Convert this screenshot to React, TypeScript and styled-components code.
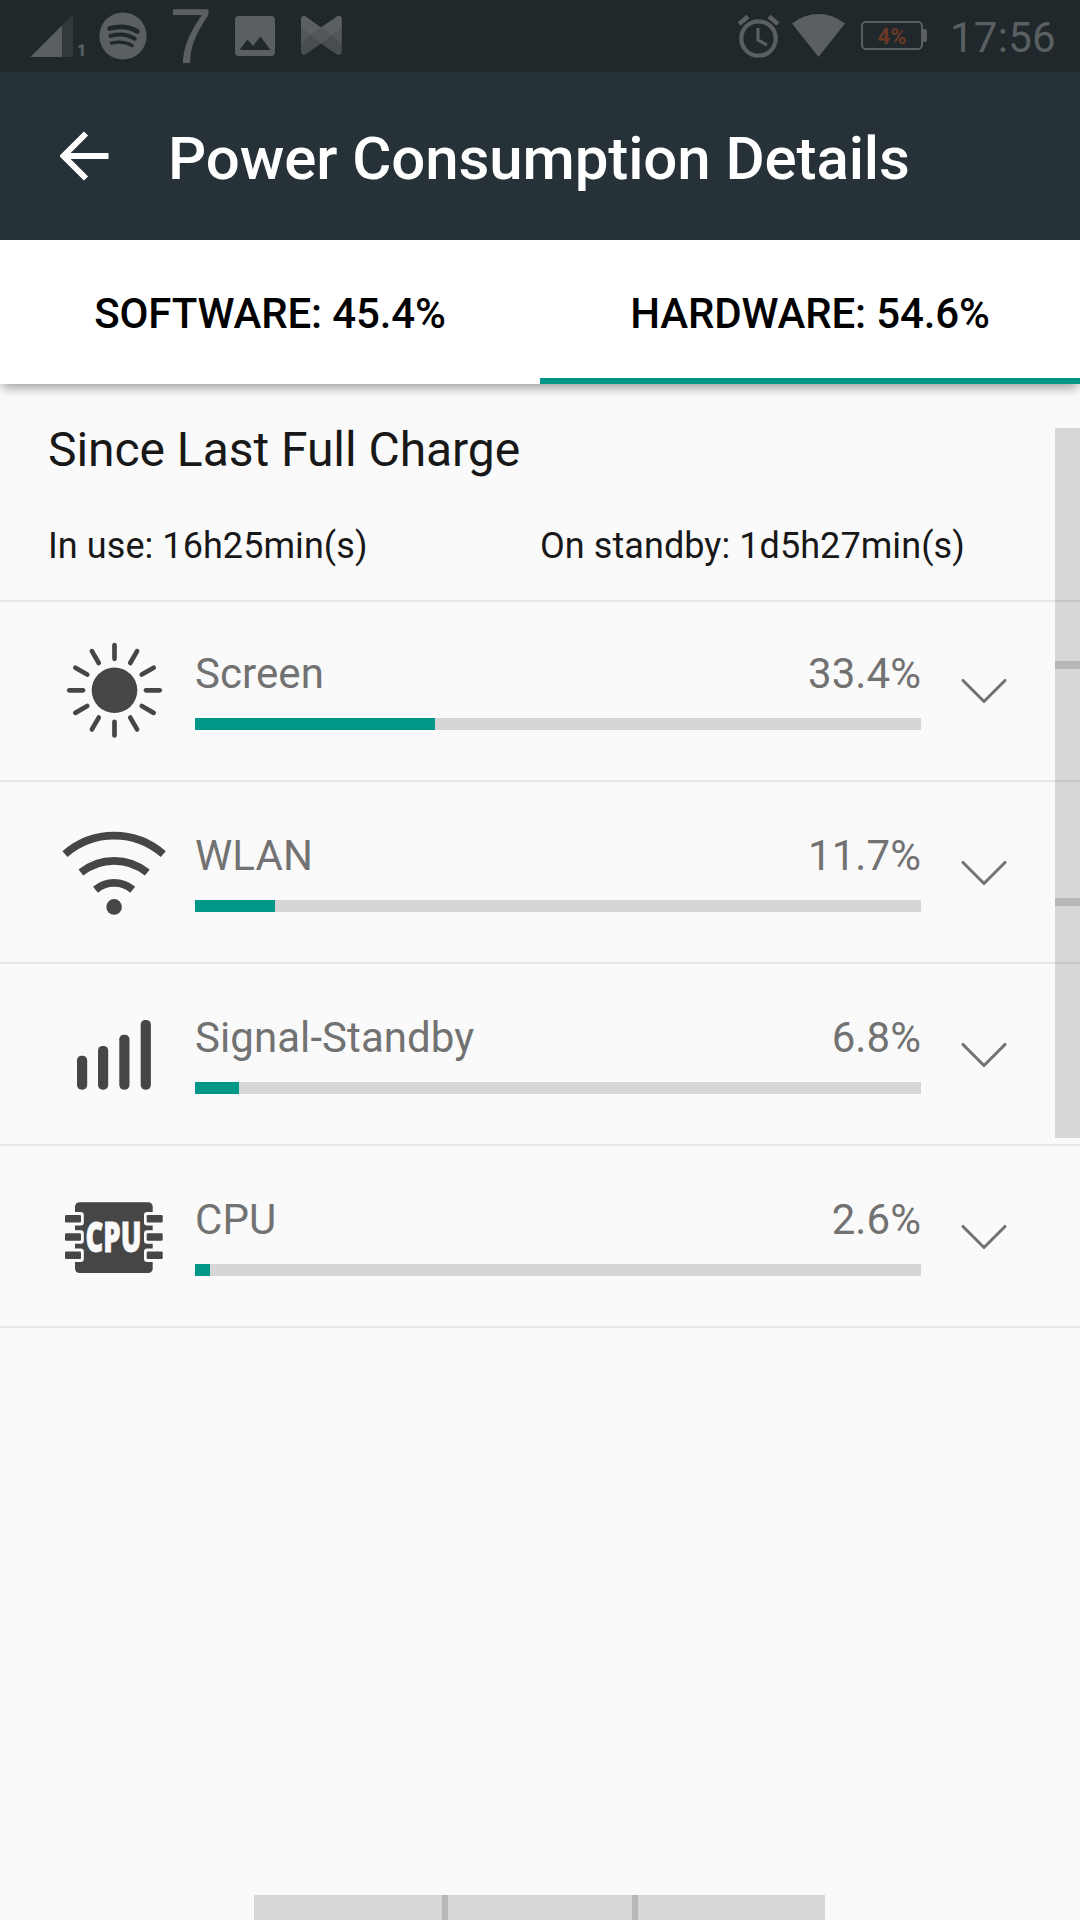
import React from "react";
import styled, { createGlobalStyle } from "styled-components";

const TEAL = "#009688";
const DIM = "#5a5f61";
const GLYPH = "#464646";

const GlobalStyle = createGlobalStyle`
  * { box-sizing: border-box; }
  body { margin: 0; background: #fafafa; }
`;

const Screen = styled.div`
  position: relative;
  display: flex;
  flex-direction: column;
  width: 1080px;
  height: 1920px;
  background: #fafafa;
  font-family: Roboto, "Liberation Sans", sans-serif;
  white-space: nowrap;
`;

const StatusBar = styled.div`
  display: flex;
  justify-content: space-between;
  height: 72px;
  background: #20282b;
  color: ${DIM};
`;

const StatusGroup = styled.div<{ $left?: number; $right?: number }>`
  display: flex;
  padding-left: ${(p) => p.$left ?? 0}px;
  padding-right: ${(p) => p.$right ?? 0}px;
`;

const StatusSvg = styled.svg<{ $gap?: number }>`
  display: block;
  height: 72px;
  flex: none;
  margin-left: ${(p) => p.$gap ?? 0}px;
`;

const SimNumber = styled.span`
  width: 11px;
  margin-left: 3px;
  padding-top: 41px;
  font-size: 16px;
  line-height: 20px;
  font-weight: 900;
`;

const SevenBadge = styled.span`
  width: 43px;
  margin-left: 22px;
  font-family: "Liberation Sans", Arial, sans-serif;
  font-size: 78px;
  line-height: 73px;
`;

const Clock = styled.span`
  margin-left: 21px;
  padding-top: 13px;
  font-size: 42px;
  line-height: 50px;
  letter-spacing: 0.3px;
`;

const AppBar = styled.header`
  display: flex;
  align-items: center;
  height: 168px;
  padding-left: 60px;
  background: #263238;
  color: #fff;
`;

const BackIcon = styled.svg`
  width: 49px;
  height: 50px;
  flex: none;
`;

const Title = styled.h1`
  margin: 6px 0 0 59px;
  font-size: 60px;
  line-height: 70px;
  font-weight: 500;
  letter-spacing: -0.1px;
`;

const Tabs = styled.nav`
  position: relative;
  display: flex;
  height: 144px;
  background: #fff;
  box-shadow: 0 6px 10px -2px rgba(0, 0, 0, 0.36);
`;

const Tab = styled.div<{ $active?: boolean }>`
  flex: 1;
  display: flex;
  align-items: center;
  justify-content: center;
  padding-top: 10px;
  border-bottom: 6px solid ${(p) => (p.$active ? TEAL : "transparent")};
  color: #000;
  font-size: 42px;
  line-height: 50px;
  font-weight: 500;
  letter-spacing: -0.13px;
`;

const Summary = styled.section`
  height: 218px;
  padding: 38px 0 0 48px;
  border-bottom: 2px solid #e6e6e6;
  color: #181818;
`;

const SummaryTitle = styled.h2`
  margin: 0;
  font-size: 48px;
  line-height: 56px;
  font-weight: 400;
  letter-spacing: -0.05px;
`;

const Durations = styled.div`
  display: grid;
  grid-template-columns: 492px 1fr;
  margin-top: 47px;
  font-size: 36px;
  line-height: 42px;
  letter-spacing: 0.07px;
`;

const List = styled.div`
  margin-top: -2px;
`;

const Row = styled.div`
  display: grid;
  grid-template-columns: 195px 726px 1fr;
  height: 182px;
  border-bottom: 2px solid #e6e6e6;
`;

const IconCell = styled.div`
  display: flex;
  align-items: center;
  padding-left: 59px;
`;

const RowIcon = styled.svg`
  width: 110px;
  height: 110px;
  overflow: visible;
  fill: ${GLYPH};
`;

const Usage = styled.div`
  padding-top: 49px;
`;

const Labels = styled.div`
  display: flex;
  justify-content: space-between;
  color: #727272;
  font-size: 42px;
  line-height: 50px;
  letter-spacing: 0.07px;
`;

const Track = styled.div`
  height: 12px;
  margin-top: 19px;
  background: #d6d6d6;
`;

const Fill = styled.div`
  height: 12px;
  background: ${TEAL};
`;

const ChevronCell = styled.div`
  display: flex;
  align-items: center;
  padding: 0 0 1px 39px;
`;

const Chevron = styled.svg`
  width: 48px;
  height: 28px;
  fill: none;
  stroke: #737373;
  stroke-width: 3.1;
  stroke-linecap: round;
  stroke-linejoin: round;
`;

const EdgePanel = styled.div<{ $vertical?: boolean }>`
  position: absolute;
  display: flex;
  ${(p) =>
    p.$vertical
      ? "flex-direction: column; right: 0; top: 428px; width: 25px; height: 710px;"
      : "flex-direction: row; left: 254px; bottom: 0; width: 571px; height: 25px;"}
`;

const EdgeZone = styled.div<{ $grow: number }>`
  flex: ${(p) => p.$grow} 1 0;
  background: rgba(0, 0, 0, 0.137);
`;

const EdgeGap = styled.div<{ $size: number }>`
  flex: 0 0 ${(p) => p.$size}px;
  background: rgba(0, 0, 0, 0.263);
`;

const SunIcon = () => (
  <RowIcon viewBox="-55.5 -55.3 110 110">
    <circle r="22.8" />
    {Array.from({ length: 12 }, (_, i) => (
      <line
        key={i}
        y1="-31.5"
        y2="-45.2"
        stroke={GLYPH}
        strokeWidth="4.7"
        strokeLinecap="round"
        transform={`rotate(${i * 30})`}
      />
    ))}
  </RowIcon>
);

const WlanIcon = () => (
  <RowIcon viewBox="-55.1 -55.2 110 110">
    <circle cy="34.7" r="7.8" />
    <g fill="none" stroke={GLYPH} strokeWidth="7.7">
      <path d="M-49.1 -18.1A74.5 74.5 0 0 1 49.1 -18.1" />
      <path d="M-33.2 .3A53 53 0 0 1 33.2 .3" />
      <path d="M-18.6 17.5A28.9 28.9 0 0 1 18.6 17.5" />
    </g>
  </RowIcon>
);

const SignalIcon = () => (
  <RowIcon viewBox="-55 -55 110 110">
    <rect x="-37" y="1.7" width="10.2" height="34" rx="4.6" />
    <rect x="-16" y="-8" width="10.2" height="43.7" rx="4.6" />
    <rect x="5.3" y="-19.3" width="10.2" height="55" rx="4.6" />
    <rect x="26.7" y="-34" width="10.2" height="69.7" rx="4.6" />
  </RowIcon>
);

const CpuIcon = () => (
  <RowIcon viewBox="-55 -55 110 110">
    <rect x="-39" y="-33.7" width="77.7" height="70.7" rx="4.5" />
    {[-21, -2.7, 15.6].map((y) => (
      <g key={y}>
        <rect x="-45" y={y - 3} width="14.8" height="13.4" rx="3" fill="#fafafa" />
        <rect x="30" y={y - 3} width="14.8" height="13.4" rx="3" fill="#fafafa" />
        <rect x="-49" y={y} width="16" height="7.4" rx="1.2" />
        <rect x="32.7" y={y} width="16" height="7.4" rx="1.2" />
      </g>
    ))}
    <text
      x="-28.5"
      y="16"
      textLength="56"
      lengthAdjust="spacingAndGlyphs"
      fill="#fafafa"
      stroke="#fafafa"
      strokeWidth=".8"
      fontFamily="Open Sans, sans-serif"
      fontWeight="800"
      fontSize="42"
    >
      CPU
    </text>
  </RowIcon>
);

const usage = [
  { name: "Screen", percent: 33.4, icon: <SunIcon /> },
  { name: "WLAN", percent: 11.7, icon: <WlanIcon /> },
  { name: "Signal-Standby", percent: 6.8, icon: <SignalIcon /> },
  { name: "CPU", percent: 2.6, icon: <CpuIcon /> },
];

export default function App() {
  return (
    <Screen>
      <GlobalStyle />
      <StatusBar>
        <StatusGroup $left={30}>
          <StatusSvg width="44" viewBox="30 0 44 72">
            <path d="M73 14.5V57H30.5z" fill="#32393c" />
            <path d="M62 25.5V57H30.5z" fill={DIM} />
          </StatusSvg>
          <SimNumber>1</SimNumber>
          <StatusSvg $gap={11} width="48" viewBox="99 0 48 72">
            <circle cx="123" cy="36" r="23.6" fill={DIM} />
            <g fill="none" stroke="#20282b" strokeLinecap="round">
              <path d="M109.5 28.5C119 25.8 129.5 26.8 137.5 31.5" strokeWidth="4.6" />
              <path d="M110.5 36C119 33.5 127.5 34.5 134.8 38.7" strokeWidth="4" />
              <path d="M111.5 43.2C119 41.3 126 42 132 45.5" strokeWidth="3.3" />
            </g>
          </StatusSvg>
          <SevenBadge>7</SevenBadge>
          <StatusSvg $gap={22} width="42" viewBox="234 0 42 72">
            <path
              fill={DIM}
              fillRule="evenodd"
              d="M239 16H271a4 4 0 0 1 4 4V52a4 4 0 0 1-4 4H239a4 4 0 0 1-4-4V20a4 4 0 0 1 4-4zM239.5 50H270.5L260.5 36.5L253 46L247.5 39.5z"
            />
          </StatusSvg>
          <StatusSvg $gap={24} width="44" viewBox="300 0 44 72">
            <path
              fill="#484e50"
              d="M301 18.5Q302 15 305.5 16.5L321 27.5L337 16.5Q341 15 341.7 18.5V52Q341 56 337 54.5L321 43.5L305.5 54.5Q302 56 301 52z"
            />
            <path
              fill={DIM}
              d="M301 18.5Q302 15 305.5 16.5L321 27.5L311 35.5L301 27.5zM341.7 18.5Q341 15 337 16.5L321 27.5L331.5 35.5L341.7 27.5z"
            />
            <path
              fill="#525859"
              d="M301 27.5L311 35.5L301 44zM341.7 27.5L331.5 35.5L341.7 44zM321 27.5L331.5 35.5L321 43.5L311 35.5z"
            />
          </StatusSvg>
        </StatusGroup>
        <StatusGroup $right={24}>
          <StatusSvg width="44" viewBox="736 0 44 72">
            <g fill="none" stroke={DIM}>
              <circle cx="757.5" cy="38.5" r="17.2" strokeWidth="4.2" />
              <path d="M738 24L747 16.5M777 24L768 16.5" strokeWidth="4.5" />
              <path d="M757 28V40L766 45" strokeWidth="3.2" />
            </g>
          </StatusSvg>
          <StatusSvg $gap={10} width="56" viewBox="790 0 56 72">
            <path d="M791 23.5Q803 14 817.5 14T844 23.5L817.5 57z" fill={DIM} />
          </StatusSvg>
          <StatusSvg $gap={13} width="69" viewBox="859 0 69 72">
            <rect x="861" y="22" width="60" height="27" rx="4" fill="none" stroke={DIM} strokeWidth="2" />
            <path d="M922 29h2a2 2 0 0 1 2 2v9a2 2 0 0 1-2 2h-2z" fill={DIM} />
            <text x="891" y="44" textAnchor="middle" fontSize="22" fontWeight="700" fill="#6b3828">
              4%
            </text>
          </StatusSvg>
          <Clock>17:56</Clock>
        </StatusGroup>
      </StatusBar>
      <AppBar>
        <BackIcon viewBox="0 0 49 50">
          <path d="M48.5 25H5.500M26 2.500L3.500 25L26 47.500" fill="none" stroke="#fff" strokeWidth="6" />
        </BackIcon>
        <Title>Power Consumption Details</Title>
      </AppBar>
      <Tabs>
        <Tab>SOFTWARE: 45.4%</Tab>
        <Tab $active>HARDWARE: 54.6%</Tab>
      </Tabs>
      <Summary>
        <SummaryTitle>Since Last Full Charge</SummaryTitle>
        <Durations>
          <span>In use: 16h25min(s)</span>
          <span>On standby: 1d5h27min(s)</span>
        </Durations>
      </Summary>
      <List>
        {usage.map((item) => (
          <Row key={item.name}>
            <IconCell>{item.icon}</IconCell>
            <Usage>
              <Labels>
                <span>{item.name}</span>
                <span>{item.percent}%</span>
              </Labels>
              <Track>
                <Fill style={{ width: `${Math.floor(item.percent)}%` }} />
              </Track>
            </Usage>
            <ChevronCell>
              <Chevron viewBox="0 0 48 28">
                <path d="M3 4.5L24 25.5L45 4.5" />
              </Chevron>
            </ChevronCell>
          </Row>
        ))}
      </List>
      <EdgePanel $vertical>
        <EdgeZone $grow={233} />
        <EdgeGap $size={8} />
        <EdgeZone $grow={229} />
        <EdgeGap $size={8} />
        <EdgeZone $grow={232} />
      </EdgePanel>
      <EdgePanel>
        <EdgeZone $grow={188} />
        <EdgeGap $size={6} />
        <EdgeZone $grow={184} />
        <EdgeGap $size={6} />
        <EdgeZone $grow={187} />
      </EdgePanel>
    </Screen>
  );
}
